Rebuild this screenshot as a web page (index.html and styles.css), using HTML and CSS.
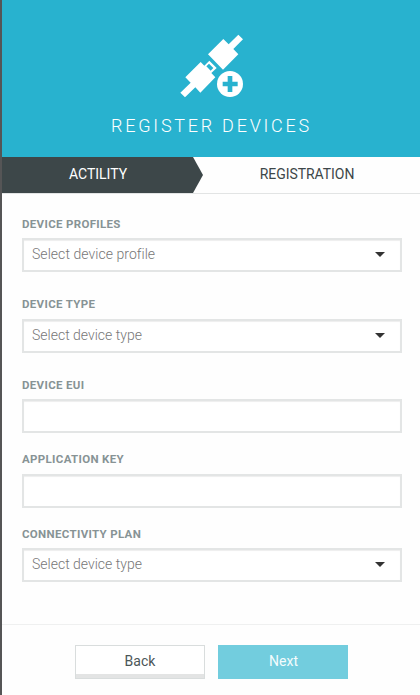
FILE: index.html
```html
<!DOCTYPE html>
<html lang="en">
<head>
<meta charset="utf-8">
<title>Register Devices</title>
<link rel="stylesheet" href="styles.css">
</head>
<body>
<main class="panel">
  <header class="hero">
    <svg class="hero-icon" viewBox="0 0 270 240" aria-hidden="true">
      <path fill="#fff" d="M114 88L160 42L176 58L205 29L219 43L190 72L205 88L159 134Z"/>
      <path fill="#fff" fill-rule="evenodd" d="M46 157L92 111L103 122L118 107L140 129L124 144L136 157L91 203L76 187L45 217L31 203L62 173ZM117 116L109 124L122 137L130 129Z"/>
      <circle cx="180" cy="177" r="39" fill="#fff"/>
      <path fill="#28b2cf" d="M173 153H187V170H203V184H187V201H173V184H158V170H173Z"/>
    </svg>
    <h1 class="title">REGISTER DEVICES</h1>
  </header>
  <nav class="steps">
    <div class="step step-active"><span>ACTILITY</span></div>
    <div class="step step-next"><span>REGISTRATION</span></div>
  </nav>
  <form class="form">
    <div class="field field-profile"><label class="label">DEVICE PROFILES</label><div class="box"><span class="ph">Select device profile</span><i class="caret"></i></div></div>
    <div class="field field-type"><label class="label">DEVICE TYPE</label><div class="box"><span class="ph">Select device type</span><i class="caret"></i></div></div>
    <div class="field field-eui"><label class="label">DEVICE EUI</label><div class="box"></div></div>
    <div class="field field-key"><label class="label">APPLICATION KEY</label><div class="box"></div></div>
    <div class="field"><label class="label">CONNECTIVITY PLAN</label><div class="box"><span class="ph">Select device type</span><i class="caret"></i></div></div>
  </form>
  <footer class="footer">
    <button class="btn btn-back" type="button">Back</button>
    <button class="btn btn-next" type="button">Next</button>
  </footer>
</main>
</body>
</html>
```
FILE: styles.css
```css
* { box-sizing: border-box; }
body { margin: 0; background: #fefefe; font-family: Roboto, "Liberation Sans", sans-serif; }
.panel { height: 695px; border-left: 2px solid #555556; display: flex; flex-direction: column; overflow: hidden; }
.hero { height: 157px; flex: none; background: #28b2cf; display: flex; flex-direction: column; align-items: center; padding: 25px 0 0; }
.hero-icon { width: 90px; height: 80px; margin-left: 8px; }
.title { margin: 9px 0 0; font-size: 18px; line-height: 24px; font-weight: 300; letter-spacing: 2.75px; color: #fff; white-space: nowrap; padding-left: 1px; }
.steps { height: 37px; flex: none; display: flex; border-bottom: 1px solid #e2e4e4; }
.step { display: flex; align-items: center; justify-content: center; font-size: 14px; padding-bottom: 2px; }
.step-active { width: 201px; padding-right: 9px; background: #3d4749; color: #fff; clip-path: polygon(0 0, 191px 0, 201px 50%, 191px 100%, 0 100%); }
.step-next { flex: 1; padding-right: 9px; color: #3d4749; letter-spacing: -.05px; }
.form { padding: 22px 18px 0 20px; height: 430px; flex: none; }
.field { height: 75px; }
.field-profile { height: 80px; }
.field-type { height: 81px; }
.field-eui { height: 74px; }
.label { display: block; height: 22px; line-height: 16px; font-size: 11.5px; font-weight: 700; letter-spacing: .33px; color: #879395; }
.field-type .label, .field-key .label { height: 23px; }
.box { height: 34px; border: 2px solid #e3e5e5; background: #fff; box-shadow: inset 0 1px 1px #eee; display: flex; align-items: center; justify-content: space-between; padding: 0 15px 2px 8px; }
.ph { font-size: 14px; line-height: 16px; font-weight: 300; color: #777; }
.field-profile .ph { letter-spacing: .05px; }
.caret { border: 5px solid transparent; border-top-color: #333; border-bottom: 0; }
.footer { flex: 1; border-top: 1px solid #eff0f0; padding: 20px 0 0 73px; display: flex; gap: 13px; }
.btn { width: 130px; height: 34px; font: 400 14px Roboto, "Liberation Sans", sans-serif; border: 1px solid #d9dddd; padding: 0 0 2px; background: #fff; color: #4b5658; }
.btn-back { box-shadow: inset 0 -4px #e3e4e4; }
.btn-next { border: 0; padding-left: 1px; background: #72cdde; color: #f4fcfd; }
```
